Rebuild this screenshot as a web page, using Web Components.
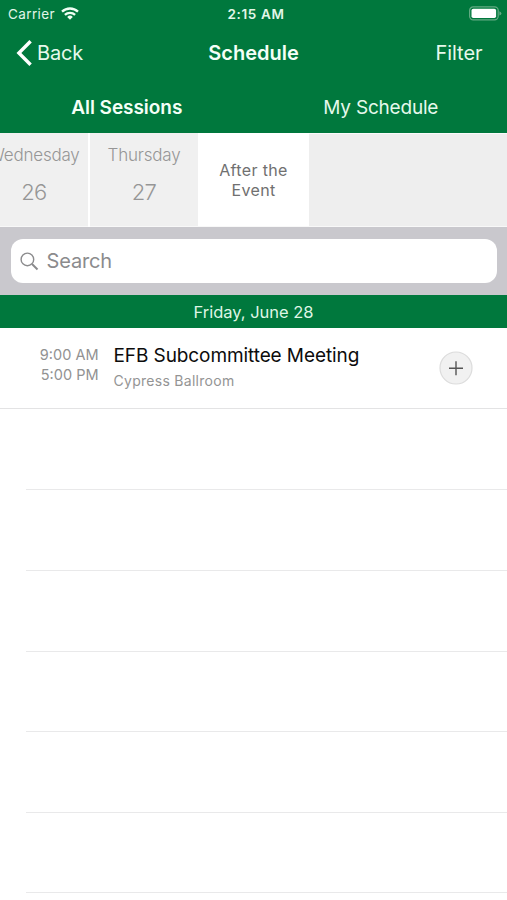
<!DOCTYPE html>
<html lang="en">
<head>
<meta charset="utf-8">
<title>Schedule</title>
<style>
html,body{margin:0;background:#fff}
body{width:507px;height:900px;overflow:hidden;font-family:Inter,"Liberation Sans",sans-serif;--green:#00783d;--line:#e9e9ea}
</style>
</head>
<body>
<schedule-screen></schedule-screen>
<script>
const define = (name, html) => {
  const tpl = document.createElement('template');
  tpl.innerHTML = html;
  customElements.define(name, class extends HTMLElement {
    constructor() {
      super();
      this.attachShadow({ mode: 'open' }).append(tpl.content.cloneNode(true));
    }
  });
};

define('status-bar', `
<style>
:host{display:grid;grid-template-columns:1fr auto 1fr;align-items:center;height:28px;padding:0 5px 0 8px;box-sizing:border-box;color:#e2f6e8;font-size:13.5px;line-height:28px}
.l{display:flex;align-items:center;gap:6px;letter-spacing:.38px}
.t{font-weight:600;letter-spacing:.65px;margin-left:2px}
.r{display:flex;justify-content:flex-end}
svg{display:block}
.l svg{margin-top:-2px}
.r svg{margin-top:-2px}
</style>
<div class="l"><span>Carrier</span>
<svg width="18" height="13" viewBox="0 0 18 13" fill="none" stroke="#f0fff4" stroke-width="2.3"><path d="M1 4.7a11.6 11.6 0 0 1 16 0M3.9 7.9a7.4 7.4 0 0 1 10.2 0"/><path d="M6.2 9.9a4 4 0 0 1 5.6 0L9 12.8z" fill="#f0fff4" stroke="none"/></svg></div>
<div class="t">2:15 AM</div>
<div class="r"><svg width="33" height="15" viewBox="0 0 33 15"><rect x=".6" y=".9" width="28.6" height="13" rx="3.6" fill="none" stroke="#63aa83" stroke-width="1.2"/><rect x="2.5" y="2.8" width="24.6" height="9.2" rx="1.8" fill="#fff"/><path d="M30.4 5.2q2 .7 2 2.2t-2 2.2z" fill="#63aa83"/></svg></div>`);

define('nav-bar', `
<style>
:host{display:grid;grid-template-columns:1fr auto 1fr;align-items:center;height:49px;padding:0 24.5px 0 15.5px;box-sizing:border-box;color:#e6f9ec;font-size:20px;line-height:24px}
.b{display:flex;align-items:center;gap:5.5px;letter-spacing:-.15px}
.t{font-weight:600;color:#f4fff7;letter-spacing:0;margin-left:9px}
.f{text-align:right;letter-spacing:-.05px}
svg{display:block}
</style>
<div class="b"><svg width="16" height="26" viewBox="0 0 16 26" fill="none" stroke="#fff" stroke-width="3.4"><path d="M14.6 1.2 2.9 13l11.7 11.8"/></svg><span>Back</span></div>
<div class="t"><slot></slot></div>
<div class="f">Filter</div>`);

define('segment-tabs', `
<style>
:host{display:grid;grid-template-columns:1fr 1fr;height:56px;line-height:62px;text-align:center;font-size:19px;color:#e6f9ec}
.a{font-weight:600;color:#f4fff7;letter-spacing:-.04px}
.m{letter-spacing:-.2px;padding-left:1px}
</style>
<div class="a"><slot name="active"></slot></div><div class="m"><slot></slot></div>`);

define('day-cell', `
<style>
:host{flex:none;display:flex;flex-direction:column;align-items:center;width:108px;height:93px;box-sizing:border-box;padding-top:12px;background:#f0f0f0;color:#969696;white-space:nowrap;font-size:17px;line-height:20px;letter-spacing:-.2px;font-weight:350}
::slotted(b){font-weight:350;font-size:22px;line-height:28px;margin-top:13px;letter-spacing:-.6px}
:host([selected]){width:111px;background:#fff;color:#707070;font-weight:400;font-size:16px;letter-spacing:.35px;padding-top:27px;text-align:center}
</style><slot></slot>`);

define('day-strip', `
<style>
:host{display:flex;height:94px;overflow:hidden;box-sizing:border-box;background:linear-gradient(#fafafa 0 1px,#eee 1px 93px,#f8f8f8 93px)}
.gap{flex:none;width:2px;background:#fff}
.first{margin-left:-20px}
</style>
<day-cell class="first"><span>Wednesday</span><b>26</b></day-cell><div class="gap"></div>
<day-cell><span>Thursday</span><b>27</b></day-cell>
<day-cell selected><span>After the</span><span>Event</span></day-cell>`);

define('search-field', `
<style>
:host{display:block;height:68px;padding:12px 10px 12px 11px;box-sizing:border-box;background:#c9c8cd}
div{display:flex;align-items:center;gap:7.5px;height:44px;border-radius:12px;background:#fff;padding-left:9px;box-sizing:border-box;color:#8b8b8d;font-size:20px;letter-spacing:-.15px;line-height:42px}
</style>
<div><svg width="19" height="19" viewBox="0 0 19 19" fill="none" stroke="#8b8b8d"><circle cx="7.4" cy="7.4" r="6.3" stroke-width="1.4"/><path d="m12 12 5.5 5.5" stroke-width="2"/></svg><span>Search</span></div>`);

define('date-header', `
<style>:host{display:block;height:33px;line-height:34px;background:var(--green);color:#dff5e5;text-align:center;font-size:16.5px;letter-spacing:-.02px}</style><slot></slot>`);

define('session-row', `
<style>
:host{display:flex;align-items:flex-start;height:81px;box-sizing:border-box;border-bottom:1px solid #e3e3e4;padding:16px 34.5px 0 0}
.time{width:98.5px;text-align:right;font-size:14.5px;line-height:20px;color:#929292;margin-top:1px}
.info{flex:1;padding-left:15px}
.title{font-size:19px;line-height:24px;color:#0c0c0c;letter-spacing:-.09px}
.place{font-size:14px;line-height:20px;color:#949494;letter-spacing:.28px;margin-top:3px}
svg{display:block;margin-top:7px}
</style>
<div class="time"><slot name="start"></slot><br><slot name="end"></slot></div>
<div class="info"><div class="title"><slot name="title"></slot></div><div class="place"><slot name="place"></slot></div></div>
<svg width="34" height="34" viewBox="0 0 34 34" fill="none"><circle cx="17" cy="17" r="16" fill="#f1f1f1" stroke="#dcdcdc" stroke-width="1.2"/><path d="M10 17.2h14M17 10.2v14" stroke="#555" stroke-width="1.4"/></svg>`);

define('empty-rows', `
<style>
:host{display:block;padding-left:26px}
div{height:81px;box-sizing:border-box;border-bottom:1px solid var(--line)}
div:nth-of-type(4),div:nth-of-type(6){height:80px}
</style><div></div><div></div><div></div><div></div><div></div><div></div>`);

define('schedule-screen', `
<style>:host{display:flex;flex-direction:column;width:507px;height:900px;overflow:hidden;background:#fff}
header{background:var(--green);flex:none}:host>*{flex:none}</style>
<header><status-bar></status-bar><nav-bar>Schedule</nav-bar>
<segment-tabs><span slot="active">All Sessions</span>My Schedule</segment-tabs></header>
<day-strip></day-strip>
<search-field></search-field>
<date-header>Friday, June 28</date-header>
<session-row><span slot="start">9:00 AM</span><span slot="end">5:00 PM</span><span slot="title">EFB Subcommittee Meeting</span><span slot="place">Cypress Ballroom</span></session-row>
<empty-rows></empty-rows>`);
</script>
</body>
</html>
